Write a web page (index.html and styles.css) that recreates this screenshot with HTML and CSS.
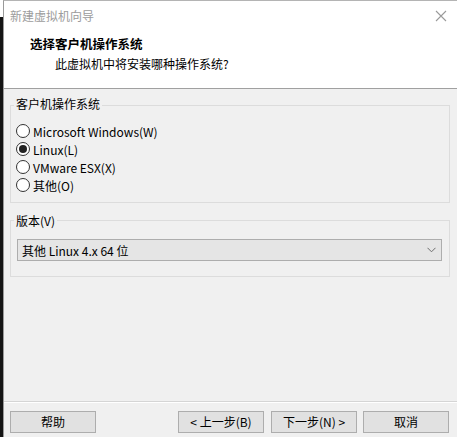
FILE: index.html
```html
<!DOCTYPE html>
<html lang="zh-CN">
<head>
<meta charset="utf-8">
<title>新建虚拟机向导</title>
<link rel="stylesheet" href="styles.css">
</head>
<body>
<div class="screen">
  <div class="edge"></div>
  <div class="window">
    <div class="header">
      <div class="titlebar">
        <span class="title">新建虚拟机向导</span>
        <svg class="close" width="12" height="12" viewBox="0 0 12 12"><path d="M1 1L11 11M11 1L1 11" stroke="#9a9a9a" stroke-width="1.1" fill="none"/></svg>
      </div>
      <div class="heading">选择客户机操作系统</div>
      <div class="subtitle">此虚拟机中将安装哪种操作系统?</div>
    </div>
    <div class="content">
      <div class="group group-os">
        <div class="group-label">客户机操作系统</div>
        <label class="radio-row"><span class="radio"></span><span>Microsoft Windows(W)</span></label>
        <label class="radio-row"><span class="radio checked"></span><span>Linux(L)</span></label>
        <label class="radio-row"><span class="radio"></span><span>VMware ESX(X)</span></label>
        <label class="radio-row"><span class="radio"></span><span>其他(O)</span></label>
      </div>
      <div class="group group-ver">
        <div class="group-label">版本(V)</div>
        <div class="select">
          <span>其他 Linux 4.x 64 位</span>
          <svg class="chev" width="9" height="6" viewBox="0 0 9 6"><path d="M0.5 0.8L4.5 4.8L8.5 0.8" stroke="#6d6d6d" stroke-width="1" fill="none"/></svg>
        </div>
      </div>
    </div>
    <div class="footer">
      <button class="btn">帮助</button>
      <div class="spacer"></div>
      <button class="btn">&lt; 上一步(B)</button>
      <button class="btn">下一步(N) &gt;</button>
      <button class="btn btn-cancel">取消</button>
    </div>
  </div>
</div>
</body>
</html>
```

FILE: styles.css
```css
html, body {
  margin: 0;
  padding: 0;
  height: 100%;
}
body {
  font-family: "Noto Sans CJK SC", "Noto Sans", sans-serif;
  font-size: 12px;
  color: #000;
  background: #fff;
}
.screen {
  display: flex;
  height: 437px;
  width: 457px;
  overflow: hidden;
}
.edge {
  width: 3px;
  margin-top: 17px;
  background: #151515;
  flex: none;
}
.window {
  flex: 1;
  display: flex;
  flex-direction: column;
  border-left: 1px solid #9a9a9a;
  border-top: 1px solid #b4b4b4;
  background: #f0f0f0;
}
.header {
  background: #fff;
  height: 87px;
  border-bottom: 1px solid #a0a0a0;
  flex: none;
}
.titlebar {
  height: 29px;
  display: flex;
  align-items: center;
  justify-content: space-between;
  padding: 0 10px 0 6px;
}
.title {
  color: #9c9c9c;
  line-height: 16px;
}
.close {
  display: block;
}
.heading {
  font-weight: bold;
  font-size: 12.5px;
  line-height: 18px;
  padding-left: 26px;
  margin-top: 5px;
}
.subtitle {
  line-height: 16px;
  padding-left: 51px;
  margin-top: 3px;
}
.content {
  flex: 1;
  display: flex;
  flex-direction: column;
  border-bottom: 1px solid #d5d5d5;
}
.group {
  border: 1px solid #dcdcdc;
  margin: 0 7px 0 6px;
  display: flex;
  flex-direction: column;
}
.group-os {
  margin-top: 16px;
  padding-bottom: 8px;
}
.group-ver {
  margin-top: 17px;
  padding-bottom: 15px;
}
.group-label {
  align-self: flex-start;
  background: #f0f0f0;
  line-height: 16px;
  padding: 0 2px;
  margin-left: 3px;
}
.group-os .group-label {
  margin-top: -10px;
  margin-bottom: 10px;
}
.group-ver .group-label {
  margin-top: -8px;
  margin-bottom: 10px;
}
.radio-row {
  display: flex;
  align-items: center;
  height: 18px;
  padding-left: 5px;
}
.radio {
  width: 12px;
  height: 12px;
  border: 1px solid #333;
  border-radius: 50%;
  background: #fff;
  margin-right: 3px;
  display: flex;
  align-items: center;
  justify-content: center;
  flex: none;
}
.radio.checked::after {
  content: "";
  width: 8px;
  height: 8px;
  border-radius: 50%;
  background: #222;
}
.select {
  margin: 0 7px 0 6px;
  height: 20px;
  border: 1px solid #adadad;
  background: #e5e5e5;
  display: flex;
  align-items: center;
  justify-content: space-between;
  padding: 0 5px 0 4px;
}
.chev {
  display: block;
}
.footer {
  flex: none;
  display: flex;
  align-items: flex-start;
  gap: 7px;
  padding: 8px 8px 4px 6px;
  border-top: 1px solid #fff;
}
.spacer {
  flex: 1;
}
.btn {
  width: 86px;
  height: 22px;
  border: 1px solid #adadad;
  background: #e1e1e1;
  font-family: inherit;
  font-size: 12px;
  color: #000;
  padding: 0;
  line-height: 18px;
}
.btn-cancel {
  margin-left: -1px;
}
```
